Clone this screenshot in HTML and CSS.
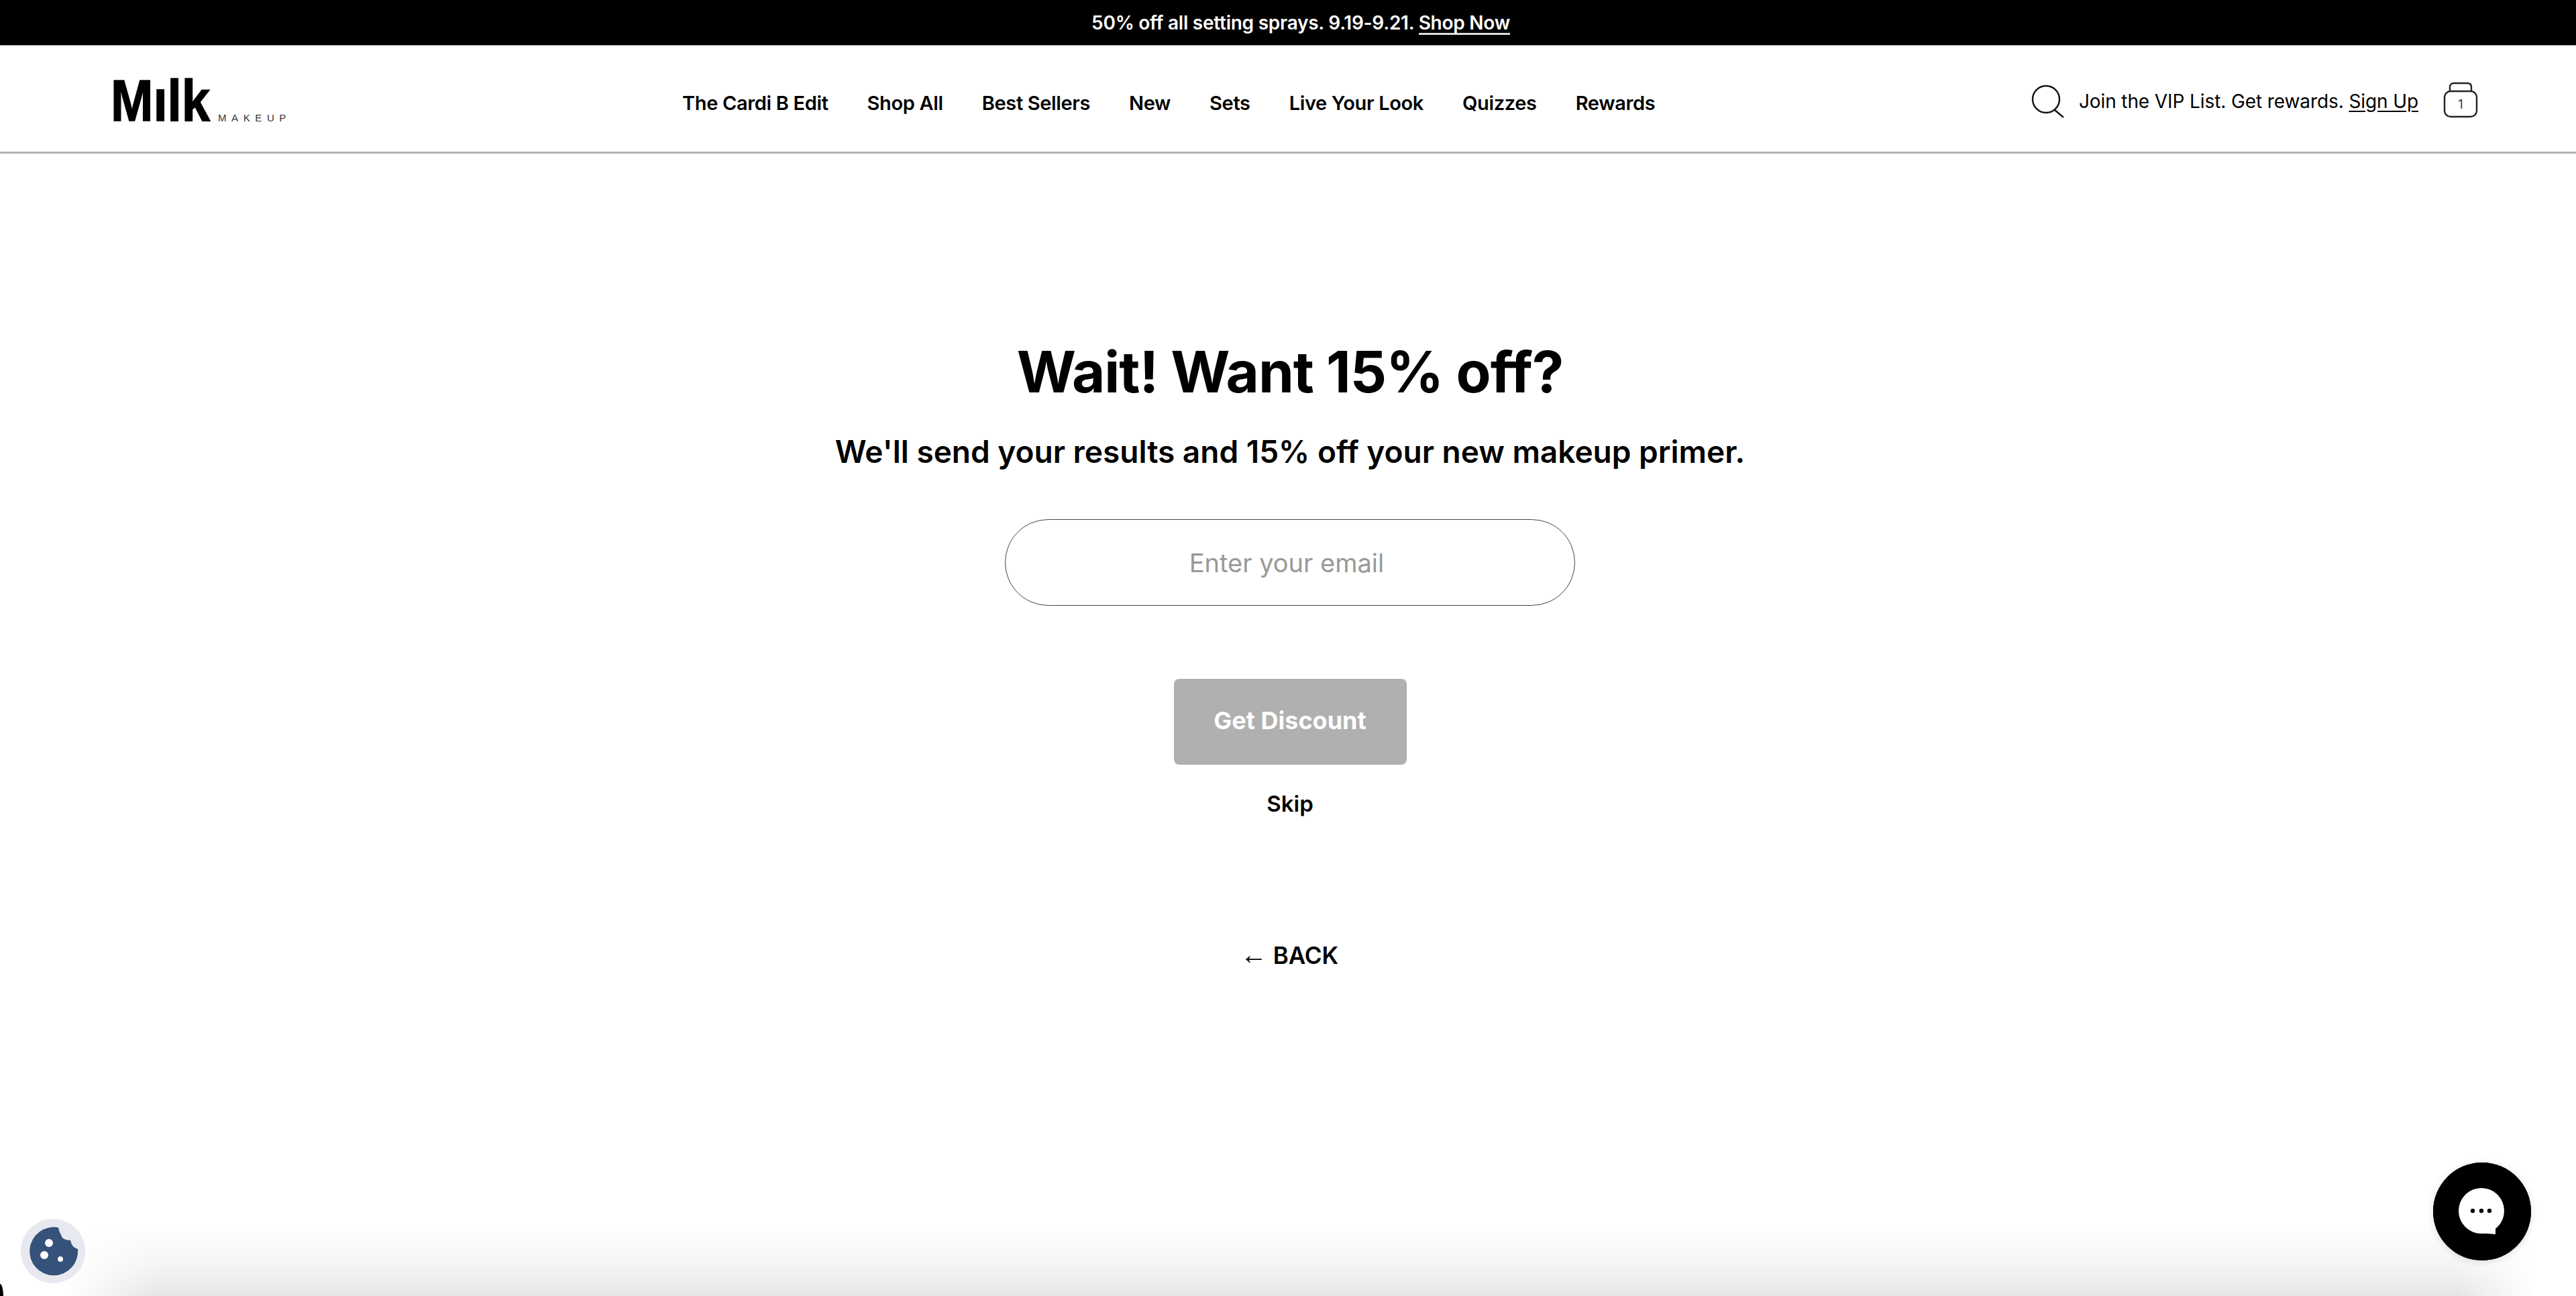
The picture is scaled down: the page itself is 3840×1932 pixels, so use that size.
FILE: index.html
```html
<!DOCTYPE html>
<html lang="en">
<head>
<meta charset="utf-8">
<title>Milk Makeup</title>
<link rel="stylesheet" href="styles.css">
</head>
<body>
<div class="announce"><span>50% off all setting sprays. 9.19-9.21. <a href="#">Shop Now</a></span></div>
<header class="site-header">
  <a class="logo" href="#" aria-label="Milk Makeup">
    <span class="logo-main">Mılk</span>
    <span class="logo-sub">MAKEUP</span>
  </a>
  <nav class="nav">
    <a href="#">The Cardi B Edit</a>
    <a href="#">Shop All</a>
    <a href="#">Best Sellers</a>
    <a href="#">New</a>
    <a href="#">Sets</a>
    <a href="#">Live Your Look</a>
    <a href="#">Quizzes</a>
    <a href="#">Rewards</a>
  </nav>
  <div class="utility">
    <svg class="icon-search" width="50" height="50" viewBox="0 0 50 50" fill="none" stroke="#111" stroke-width="2.4">
      <circle cx="22" cy="22" r="20"/>
      <path d="M35 38 L48 49"/>
    </svg>
    <span class="vip">Join the VIP List. Get rewards. <a href="#">Sign Up</a></span>
    <svg class="icon-bag" width="52" height="54" viewBox="0 0 52 54" fill="none" stroke="#222" stroke-width="2.4">
      <path d="M10 14 V8 Q10 2 16 2 H36 Q42 2 42 8 V14"/>
      <rect x="2" y="14" width="48" height="38" rx="9"/>
      <text class="bag-count" x="26" y="40" text-anchor="middle">1</text>
    </svg>
  </div>
</header>
<main class="quiz">
  <h1 class="title">Wait! Want 15% off?</h1>
  <p class="subtitle">We'll send your results and 15% off your new makeup primer.</p>
  <input class="email" type="email" placeholder="Enter your email">
  <button class="submit" type="button">Get Discount</button>
  <a class="skip" href="#">Skip</a>
  <a class="back" href="#"><span class="arrow">←</span> BACK</a>
</main>
<div class="edge-shadow"></div>
<div class="corner"></div>
<button class="cookie" type="button" aria-label="Cookie settings">
  <svg width="96" height="96" viewBox="0 0 96 96">
    <path fill="#34527a" d="M56 13 A36 36 0 1 0 85 45 Q76 43 74 32 Q62 32 60 24 Q57 19 56 13 Z"/>
    <circle cx="42" cy="36" r="6" fill="#fff"/>
    <circle cx="35" cy="54" r="6" fill="#fff"/>
    <circle cx="59" cy="60" r="4" fill="#fff"/>
  </svg>
</button>
<button class="chat" type="button" aria-label="Chat">
  <svg width="146" height="146" viewBox="0 0 146 146">
    <circle cx="73" cy="73" r="73" fill="#000"/>
    <circle cx="72" cy="72" r="34" fill="#fff"/>
    <path fill="#fff" d="M70 105 L93 107 V90 Z"/>
    <circle cx="59" cy="72" r="3.2" fill="#000"/>
    <circle cx="72" cy="72" r="3.2" fill="#000"/>
    <circle cx="84" cy="72" r="3.2" fill="#000"/>
  </svg>
</button>
</body>
</html>
```
FILE: styles.css
```css
* { box-sizing: border-box; }
html, body { margin: 0; padding: 0; }
body {
  width: 3840px;
  height: 1932px;
  overflow: hidden;
  position: relative;
  background: #fff;
  color: #000;
  font-family: Inter, "Liberation Sans", sans-serif;
}
a { color: inherit; text-decoration: none; }

.announce {
  height: 68px;
  background: #000;
  border-bottom: 1px solid #888;
  display: flex;
  align-items: center;
  justify-content: center;
  color: #fff;
  font-size: 28px;
  font-weight: 600;
  letter-spacing: -0.25px;
  padding: 2px 0 0 38px;
}
.announce a {
  display: inline-block;
  line-height: 30px;
  border-bottom: 3px solid #ddd;
}

.site-header {
  height: 161px;
  border-bottom: 3px solid #b2b2b2;
  display: flex;
  align-items: center;
  padding: 0 146px 0 165px;
}
.logo {
  display: flex;
  align-items: flex-end;
  margin-top: 5px;
}
.logo-main {
  display: block;
  width: 150px;
  font-family: "Liberation Sans", sans-serif;
  font-weight: 700;
  font-size: 88px;
  line-height: 64px;
  color: #000;
  -webkit-text-stroke: 1.5px #000;
  transform: scaleX(0.865);
  transform-origin: left center;
  white-space: nowrap;
}
.logo-sub {
  display: block;
  margin-left: 10px;
  font-family: "Liberation Sans", sans-serif;
  font-size: 15px;
  line-height: 12px;
  letter-spacing: 7.6px;
  color: #333;
  width: 101px;
  white-space: nowrap;
}

.nav {
  display: flex;
  gap: 58px;
  margin: 14px 0 0 591px;
  font-size: 29px;
  font-weight: 600;
  letter-spacing: -0.35px;
  line-height: 36px;
}
.utility {
  margin-left: auto;
  display: flex;
  align-items: center;
}
.icon-search { display: block; margin-top: 7px; }
.vip {
  margin: 7px 0 0 21px;
  font-size: 28px;
  letter-spacing: -0.1px;
}
.vip a { text-decoration: underline; text-underline-offset: 4px; }
.icon-bag { display: block; margin: 3px 0 0 37px; }
.bag-count { font-size: 18px; fill: #333; stroke: none; font-family: Inter, sans-serif; }

.quiz {
  display: flex;
  flex-direction: column;
  align-items: center;
  padding: 276px 0 0 6px;
}
.title {
  margin: 0;
  font-size: 85px;
  line-height: 100px;
  font-weight: 700;
  letter-spacing: -1px;
}
.subtitle {
  margin: 38px 0 0;
  font-size: 46px;
  line-height: 60px;
  font-weight: 600;
  letter-spacing: 0;
}
.email {
  margin-top: 71px;
  width: 850px;
  height: 129px;
  border: 1px solid #444;
  border-radius: 65px;
  background: #fff;
  text-align: center;
  font-family: Inter, sans-serif;
  font-size: 38px;
  padding: 0 10px 0 0;
  outline: none;
}
.email::placeholder { color: #999; opacity: 1; }
.submit {
  margin-top: 109px;
  width: 347px;
  height: 128px;
  border: 0;
  border-radius: 8px;
  background: #b0b0b0;
  color: #fff;
  font-family: Inter, sans-serif;
  font-size: 36px;
  font-weight: 700;
  padding: 0 0 4px;
}
.skip {
  margin-top: 38px;
  font-size: 33px;
  line-height: 40px;
  font-weight: 600;
}
.back {
  margin-top: 185px;
  margin-right: 2px;
  font-size: 35px;
  line-height: 40px;
  font-weight: 600;
}
.arrow { font-family: "Liberation Sans", sans-serif; font-size: 40px; font-weight: 400; }

.edge-shadow {
  position: absolute;
  left: 0;
  right: 0;
  bottom: 0;
  height: 110px;
  background: linear-gradient(to bottom, rgba(0, 0, 0, 0), rgba(0, 0, 0, 0.045) 60%, rgba(0, 0, 0, 0.1));
  -webkit-mask-image: linear-gradient(to right, transparent 98px, #000 240px, #000 3660px, transparent 3780px);
  mask-image: linear-gradient(to right, transparent 98px, #000 240px, #000 3660px, transparent 3780px);
}
.corner {
  position: absolute;
  left: 0;
  bottom: 0;
  width: 5px;
  height: 18px;
  background: #000;
  border-top-right-radius: 5px 18px;
}
.cookie, .chat {
  position: absolute;
  padding: 0;
  border: 0;
  border-radius: 50%;
  line-height: 0;
}
.cookie {
  left: 31px;
  top: 1817px;
  width: 96px;
  height: 96px;
  background: #e8e8f0;
}
.chat {
  left: 3627px;
  top: 1733px;
  width: 146px;
  height: 146px;
  background: #000;
  box-shadow: 0 2px 12px rgba(0, 0, 0, 0.12);
}
```
